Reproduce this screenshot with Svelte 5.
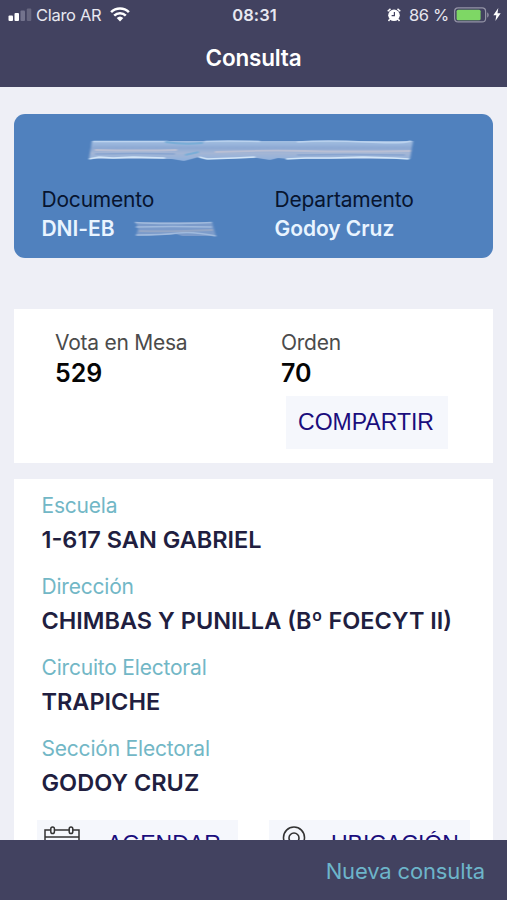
<script lang="ts">
  const voter = {
    documentType: 'DNI-EB',
    department: 'Godoy Cruz',
    table: '529',
    order: '70',
  }

  const details = [
    { label: 'Escuela', value: '1-617 SAN GABRIEL' },
    { label: 'Dirección', value: 'CHIMBAS Y PUNILLA (Bº FOECYT II)' },
    { label: 'Circuito Electoral', value: 'TRAPICHE' },
    { label: 'Sección Electoral', value: 'GODOY CRUZ' },
  ]
</script>

<div class="screen">
  <header>
    <div class="status">
      <div class="carrier">
        <svg class="signal" width="24" height="14" viewBox="0 0 24 14">
          <rect x="0.5" y="7.5" width="4.5" height="5.5" rx="1" fill="#fff" />
          <rect x="6.5" y="5" width="4.5" height="8" rx="1" fill="#fff" />
          <rect x="12.5" y="2.5" width="4.5" height="10.5" rx="1" fill="#73738d" />
          <rect x="18.8" y="0.5" width="4.5" height="12.5" rx="1" fill="#66667f" />
        </svg>
        <span>Claro AR</span>
        <svg class="wifi" width="20" height="15" viewBox="0 0 20 15">
          <g fill="none" stroke="#fff" stroke-width="2.6">
            <path d="M1.1 5.1a12.7 12.7 0 0 1 17.8 0" />
            <path d="M4.2 8.6a8.3 8.3 0 0 1 11.6 0" />
          </g>
          <path d="M6.7 11a4.8 4.8 0 0 1 6.6 0L10 14.4z" fill="#fff" />
        </svg>
      </div>
      <span class="clock">08:31</span>
      <div class="power">
        <svg class="alarm" width="14" height="14" viewBox="0 0 14 14">
          <circle cx="7" cy="7.3" r="5.8" fill="#fff" />
          <path d="M0.7 3.3 3.5 0.9M13.3 3.3 10.5 0.9M2.8 11.3 1.5 13M11.2 11.3l1.3 1.7" stroke="#fff" stroke-width="1.5" />
          <path d="M7.4 4v3.7H4.6" fill="none" stroke="#424260" stroke-width="1.2" />
        </svg>
        <span>86 %</span>
        <svg class="battery" width="36" height="16" viewBox="0 0 36 16">
          <rect x="0.6" y="0.9" width="31" height="14" rx="3.5" fill="none" stroke="#9494a6" stroke-width="1.2" />
          <rect x="2.6" y="2.8" width="24" height="10.4" rx="1.5" fill="#7ed765" />
          <path d="M33.2 5.5c2 .6 2 4.4 0 5z" fill="#9494a6" />
        </svg>
        <svg class="bolt" width="8" height="13" viewBox="0 0 8 13">
          <path d="M5.3 0 0.3 7.3h3L2.4 13l5.3-7.7H4.5z" fill="#fff" />
        </svg>
      </div>
    </div>
    <h1>Consulta</h1>
  </header>

  <main>
    <section class="voter">
      <svg class="name" width="328" height="26" viewBox="0 0 328 26">
        <defs>
          <linearGradient id="smear" x1="0" y1="0" x2="0" y2="1">
            <stop offset="0" stop-color="#a3bfe2" />
            <stop offset="0.35" stop-color="#8da9d3" />
            <stop offset="0.6" stop-color="#a4b6d5" />
            <stop offset="1" stop-color="#8fb0dc" />
          </linearGradient>
          <filter id="soft" x="-5%" y="-20%" width="110%" height="140%">
            <feGaussianBlur stdDeviation="1 0.7" />
          </filter>
        </defs>
        <g filter="url(#soft)">
          <path d="M5 3H326L323 21H202L191 20L183 22L170 20L120 21L112 19L97 23L85 21L2 21z" fill="url(#smear)" />
          <path d="M6 3.500h75M118 3.500q20-1 55 0M210 4q30-2 68 0t46-1" fill="none" stroke="#bcd3ee" stroke-width="1.4" />
          <path d="M2 21l10-2 14 1 20-1 32 1M112 19l8 2 28-1 20-1M199 21l20-1 25 0 32-1 30 1 16 1" fill="none" stroke="#d2e5f7" stroke-width="1.6" />
          <path d="M8 12q45 1 82 0M128 14q50-2 90-1t106 0" fill="none" stroke="#b9bfd4" stroke-width="1.8" />
          <path d="M8 16q45-1 80 0M210 17q50-1 108 0" fill="none" stroke="#89a5d0" stroke-width="1.5" />
          <path d="M78 4q18 3 38 1M98 17l14-3" fill="none" stroke="#79add7" stroke-width="2" />
        </g>
      </svg>
      <div class="columns">
        <div>
          <div class="label">Documento</div>
          <div class="value document">
            <span>{voter.documentType}</span>
            <svg width="88" height="18" viewBox="0 0 88 18">
              <g filter="url(#soft)" fill="none">
                <path d="M4 2H80L84 16H50L44 14L4 16L6 9z" fill="#7b9bca" />
                <path d="M3 2.500q30 2 77 0M4 7q35-1 76 0M4 15q28 0 42-2t38 3" stroke="#a0badd" stroke-width="1.4" />
                <path d="M7 11q30 1 74-1" stroke="#93a6c6" stroke-width="2" />
              </g>
            </svg>
          </div>
        </div>
        <div>
          <div class="label">Departamento</div>
          <div class="value">{voter.department}</div>
        </div>
      </div>
    </section>

    <section class="vote">
      <div>
        <div class="label">Vota en Mesa</div>
        <div class="number">{voter.table}</div>
      </div>
      <div>
        <div class="label">Orden</div>
        <div class="number">{voter.order}</div>
        <button class="share">COMPARTIR</button>
      </div>
    </section>

    <section class="details">
      <dl>
        {#each details as detail}
          <dt>{detail.label}</dt>
          <dd>{detail.value}</dd>
        {/each}
      </dl>
      <div class="actions">
        <button>
          <svg width="36" height="38" viewBox="0 0 36 38" fill="none" stroke="#333" stroke-width="1.5">
            <path d="M6.8 4H1v31h34V4h-6.2M10.4 4h14.8M1 11h34" />
            <rect x="6.8" y="1" width="3.6" height="6.5" rx="1.8" />
            <rect x="25.2" y="1" width="3.6" height="6.5" rx="1.8" />
          </svg>
          <span>AGENDAR</span>
        </button>
        <button class="location">
          <svg width="24" height="38" viewBox="0 0 24 38" fill="none" stroke="#333" stroke-width="1.6">
            <path d="M12 36C7 26 1.5 19 1.5 11.500a10.500 10.500 0 0 1 21 0C22.500 19 17 26 12 36z" />
            <circle cx="12" cy="12" r="5" />
          </svg>
          <span>UBICACIÓN</span>
        </button>
      </div>
    </section>
  </main>

  <footer>
    <button>Nueva consulta</button>
  </footer>
</div>

<style>
  :global(body) {
    margin: 0;
  }

  .screen {
    display: flex;
    flex-direction: column;
    width: 507px;
    height: 900px;
    overflow: hidden;
    background: #eeeff6;
    font-family: Inter, 'Liberation Sans', sans-serif;
  }

  button {
    border: 0;
    padding: 0;
    color: #1a0d7c;
    background: #f5f7fc;
    font-family: 'Liberation Sans', Arial, sans-serif;
    font-size: 23px;
  }

  svg {
    flex: none;
  }

  header {
    flex: none;
    height: 87px;
    color: #fff;
    background: #424260;
  }

  .status {
    display: grid;
    grid-template-columns: 1fr auto 1fr;
    align-items: center;
    height: 29px;
    padding: 0 6px 0 8px;
    font-size: 16.5px;
    color: #e8e8f0;
  }

  .carrier,
  .power {
    display: flex;
    align-items: center;
  }

  .carrier span {
    margin: 0 9px 0 4px;
    letter-spacing: -0.3px;
  }

  .clock {
    font-weight: 600;
    letter-spacing: 0.1px;
  }

  .power {
    justify-content: flex-end;
  }

  .power span {
    margin: 0 5px 0 8px;
    letter-spacing: -0.3px;
  }

  .bolt {
    margin-left: 3px;
  }

  h1 {
    margin: 0;
    font-size: 22.5px;
    font-weight: 600;
    line-height: 57px;
    letter-spacing: -0.2px;
    text-align: center;
  }

  main {
    flex: 1;
    min-height: 0;
    overflow: hidden;
    padding: 27px 14px 0;
  }

  .voter {
    box-sizing: border-box;
    height: 144px;
    padding-top: 24px;
    border-radius: 11px;
    background: #5081be;
  }

  .name {
    display: block;
    margin: 0 auto 0 73px;
  }

  .columns {
    display: grid;
    grid-template-columns: 233px 1fr;
    padding: 21px 0 0 27.5px;
  }

  .label {
    font-size: 21px;
    line-height: 29px;
    letter-spacing: -0.2px;
  }

  .voter .label {
    color: #07142f;
  }

  .value {
    font-size: 21px;
    font-weight: 600;
    line-height: 29px;
    letter-spacing: -0.05px;
    color: #e9f4ff;
  }

  .document {
    display: flex;
    align-items: center;
    gap: 18px;
  }

  .vote {
    display: grid;
    grid-template-columns: 226px 1fr;
    box-sizing: border-box;
    height: 154px;
    margin-top: 51px;
    padding: 19px 0 0 41px;
    background: #fff;
  }

  .vote .label {
    letter-spacing: -0.25px;
    color: #4b4b4b;
  }

  .number {
    font-size: 25px;
    font-weight: 600;
    line-height: 33px;
    color: #050505;
  }

  .share {
    display: block;
    width: 162px;
    height: 53px;
    margin: 6px 0 0 5px;
    padding-right: 2px;
  }

  .details {
    height: 420px;
    margin-top: 16px;
    padding: 11px 23px 0;
    background: #fff;
  }

  dl {
    margin: 0 0 0 4.5px;
  }

  dt {
    font-size: 21px;
    line-height: 32px;
    letter-spacing: -0.2px;
    color: #72b7c6;
  }

  dd {
    margin: 0 0 13px;
    font-size: 23.5px;
    font-weight: 600;
    line-height: 36px;
    color: #211e40;
    white-space: nowrap;
  }

  .actions {
    display: flex;
    gap: 31px;
    margin-top: 19px;
  }

  .actions button {
    display: flex;
    align-items: center;
    gap: 27px;
    width: 202px;
    height: 53px;
    padding: 0 0 4px 7px;
  }

  .actions .location {
    padding-left: 13px;
    gap: 25px;
  }

  footer {
    display: flex;
    flex: none;
    justify-content: flex-end;
    align-items: center;
    height: 60px;
    padding: 2px 22px 0 0;
    box-sizing: border-box;
    background: #424260;
  }

  footer button {
    color: #6db5ca;
    background: none;
    font-family: Inter, sans-serif;
    font-size: 22px;
    letter-spacing: -0.15px;
  }
</style>
